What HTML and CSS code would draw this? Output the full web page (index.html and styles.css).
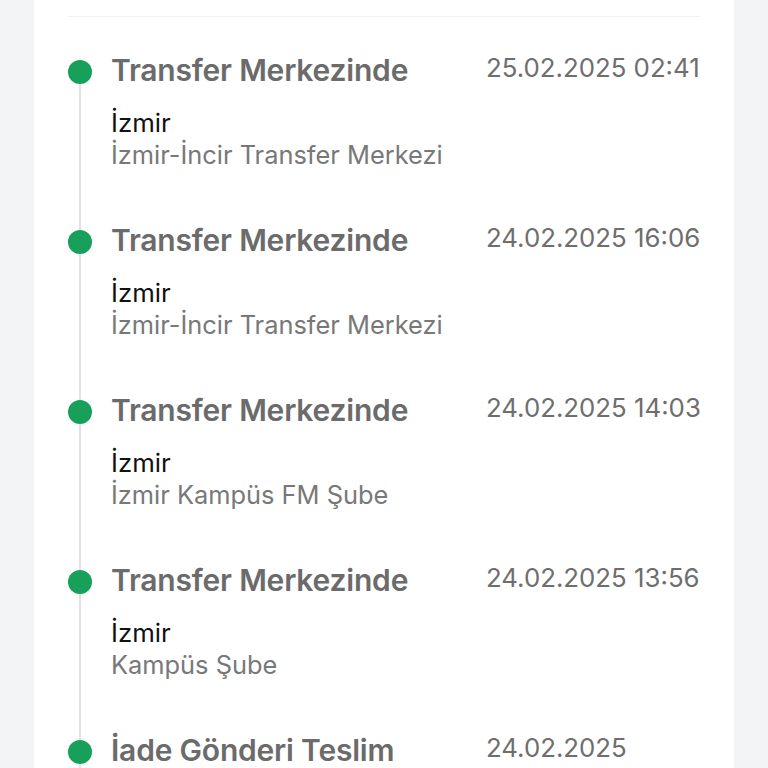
FILE: index.html
```html
<!DOCTYPE html>
<html lang="tr">
<head>
<meta charset="utf-8">
<link rel="stylesheet" href="styles.css">
</head>
<body>
<div class="page">
  <div class="card">
    <div class="divider"></div>
    <ul class="timeline">
      <li class="item first">
        <div class="rail"><span class="dot"></span></div>
        <div class="content">
          <div class="head">
            <div class="title">Transfer Merkezinde</div>
            <div class="date">25.02.2025 02:41</div>
          </div>
          <div class="city">İzmir</div>
          <div class="place">İzmir-İncir Transfer Merkezi</div>
        </div>
      </li>
      <li class="item">
        <div class="rail"><span class="dot"></span></div>
        <div class="content">
          <div class="head">
            <div class="title">Transfer Merkezinde</div>
            <div class="date">24.02.2025 16:06</div>
          </div>
          <div class="city">İzmir</div>
          <div class="place">İzmir-İncir Transfer Merkezi</div>
        </div>
      </li>
      <li class="item">
        <div class="rail"><span class="dot"></span></div>
        <div class="content">
          <div class="head">
            <div class="title">Transfer Merkezinde</div>
            <div class="date">24.02.2025 14:03</div>
          </div>
          <div class="city">İzmir</div>
          <div class="place">İzmir Kampüs FM Şube</div>
        </div>
      </li>
      <li class="item">
        <div class="rail"><span class="dot"></span></div>
        <div class="content">
          <div class="head">
            <div class="title">Transfer Merkezinde</div>
            <div class="date">24.02.2025 13:56</div>
          </div>
          <div class="city">İzmir</div>
          <div class="place">Kampüs Şube</div>
        </div>
      </li>
      <li class="item last">
        <div class="rail"><span class="dot"></span></div>
        <div class="content">
          <div class="head">
            <div class="title">İade Gönderi Teslim</div>
            <div class="date">24.02.2025</div>
          </div>
        </div>
      </li>
    </ul>
  </div>
</div>
</body>
</html>
```
FILE: styles.css
```css
* { box-sizing: border-box; }
html, body { margin: 0; padding: 0; }
body {
  background: #f3f4f6;
  font-family: Inter, "Noto Sans", sans-serif;
  height: 768px;
  overflow: hidden;
}
.page {
  padding: 0 34px;
}
.card {
  background: #ffffff;
  padding: 16px 34px 40px 34px;
  min-height: 900px;
}
.divider {
  height: 1px;
  background: #f0f1f3;
}
.timeline {
  list-style: none;
  margin: 0;
  padding: 0;
}
.item {
  display: grid;
  grid-template-columns: 24px 1fr;
  column-gap: 19px;
  height: 170px;
}
.rail {
  display: flex;
  flex-direction: column;
  align-items: center;
  background: linear-gradient(#e2e2e2, #e2e2e2) center bottom / 2px 100% no-repeat;
}
.first .rail {
  background-size: 2px calc(100% - 43px);
}
.dot {
  display: block;
  width: 24px;
  height: 24px;
  border-radius: 50%;
  background: #16a05a;
  margin-top: 43px;
}
.content {
  padding-top: 35px;
}
.head {
  display: flex;
  justify-content: space-between;
  align-items: flex-start;
}
.title {
  font-size: 30px;
  line-height: 36px;
  font-weight: 600;
  color: #6b6b6b;
  letter-spacing: -0.2px;
}
.date {
  width: 214px;
  flex: none;
  font-size: 25.8px;
  line-height: 30px;
  padding-top: 1px;
  color: #6e6e6e;
  white-space: nowrap;
}
.city {
  margin-top: 19px;
  font-size: 25.8px;
  line-height: 32px;
  color: #111111;
}
.place {
  font-size: 25.4px;
  line-height: 32px;
  color: #787878;
}
```
